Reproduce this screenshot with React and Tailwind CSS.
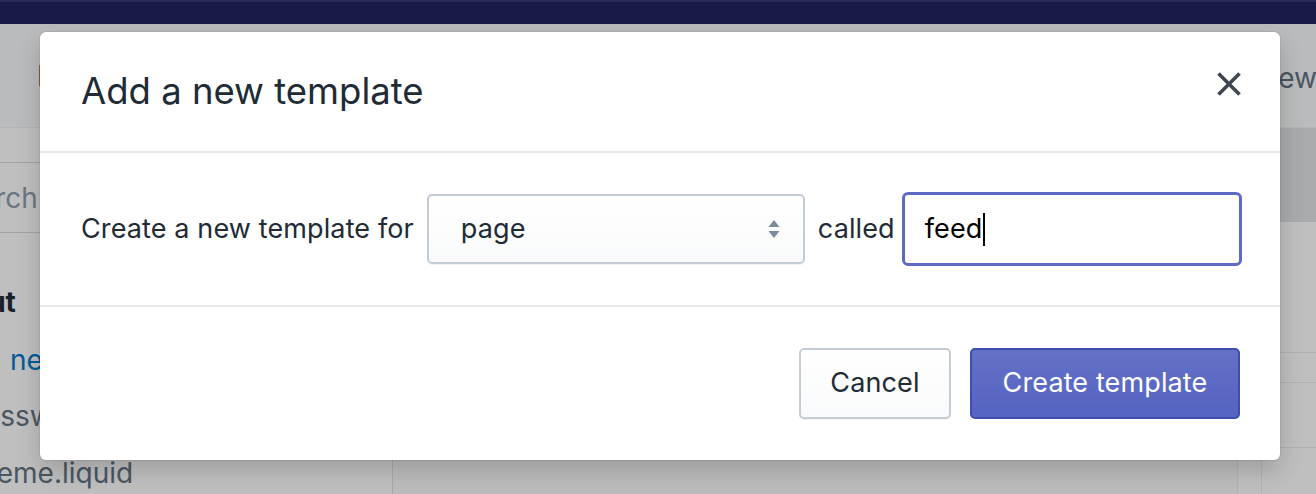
export default function App() {
  return (
    <div
      className="relative w-[1316px] h-[494px] overflow-hidden bg-white"
      style={{ fontFamily: 'Inter, "Noto Sans", sans-serif' }}
    >
      <Page />
      <div className="absolute inset-0 bg-[rgba(0,0,0,0.25)]" />
      <TemplateModal />
    </div>
  )
}

function Page() {
  return (
    <div className="flex flex-col h-full">
      <div className="h-[24px] shrink-0 bg-[#1f2463] border-t-2 border-[#363a75]" />
      <div className="h-[104px] shrink-0 flex items-center bg-[#f9fafb] border-b border-[#eef0f2] whitespace-nowrap">
        <span className="ml-[37px] text-[28px] text-[#212b36]">Edit code</span>
        <span className="ml-auto mr-[-1px] text-[28px] text-[#637381] translate-y-[2px]">Preview</span>
      </div>
      <div className="flex flex-1 min-h-0">
        <aside className="w-[393px] shrink-0 bg-white border-r border-[#dfe3e8] overflow-hidden pt-[34px] whitespace-nowrap">
          <div className="ml-[-55px] h-[71px] flex items-center border-y border-[#d6dae0]">
            <span className="text-[28px] text-[#919eab]">Search files...</span>
          </div>
          <div className="ml-[-77px] mt-[49px] text-[28px] font-bold text-[#212b36] leading-[40px]">Layout</div>
          <div className="ml-[-87px] mt-[18px] text-[28px] text-[#007ace] leading-[40px] [word-spacing:6px]">Add a new layout</div>
          <div className="ml-[-33px] mt-[16px] text-[28px] text-[#637381] leading-[40px]">password.liquid</div>
          <div className="ml-[-29px] mt-[17px] text-[28px] text-[#637381] leading-[40px]">theme.liquid</div>
        </aside>
        <main className="flex-1 flex flex-col">
          <div className="h-[94px] shrink-0 bg-[#e0e3e7]" />
          <div className="flex-1 flex">
            <div className="flex-1 bg-[#fbfbfb]" />
            <div className="w-[25px] border-x border-[#eceef0] bg-white" />
            <div className="w-[54px] bg-white flex flex-col">
              <div className="h-[131px] border-b border-[#eceef0]" />
              <div className="h-[30px] border-b border-[#eceef0]" />
              <div className="h-[65px] border-b border-[#eceef0]" />
            </div>
          </div>
        </main>
      </div>
    </div>
  )
}

function TemplateModal() {
  return (
    <div className="absolute left-[40px] top-[32px] w-[1240px] h-[428px] bg-white rounded-[6px] shadow-[0_0_0_1px_rgba(0,0,0,0.05),0_10px_24px_rgba(0,0,0,0.18)] flex flex-col">
      <div className="h-[121px] shrink-0 flex items-center justify-between pl-[41px] pr-[38px] border-b-2 border-[#e6e8ea]">
        <h2 className="text-[36.5px] text-[#212b36] leading-none whitespace-nowrap">Add a new template</h2>
        <button className="self-start mt-[39px] w-[26px] h-[26px] flex items-center justify-center text-[#3d4651]">
          <svg width="26" height="26" viewBox="0 0 26 26" fill="none" stroke="currentColor" strokeWidth="3.6">
            <path d="M2.5 2.5 L23.5 23.5 M23.5 2.5 L2.5 23.5" />
          </svg>
        </button>
      </div>
      <div className="h-[154px] shrink-0 flex items-center pl-[41px] pr-[39px] border-b-2 border-[#e6e8ea] text-[27px] tracking-[0.12px] text-[#212b36] whitespace-nowrap">
        <span className="shrink-0">Create a new template for</span>
        <div className="shrink-0 ml-[13px] w-[378px] h-[70px] rounded-[5px] border-2 border-[#c4cdd5] bg-gradient-to-b from-white to-[#f9fafb] shadow-[0_1px_0_rgba(22,29,37,0.05)] flex items-center pl-[32px] pr-[23px]">
          <span className="flex-1">page</span>
          <svg width="12" height="20" viewBox="0 0 12 20" fill="#798c9c">
            <path d="M6 1 L11.5 8 H0.5 Z" />
            <path d="M6 19 L11.5 12 H0.5 Z" />
          </svg>
        </div>
        <span className="shrink-0 ml-[13px]">called</span>
        <div className="shrink-0 ml-[7px] w-[340px] h-[74px] rounded-[6px] border-[3px] border-[#5c6ac4] flex items-center pl-[20px] text-black">
          <span>feed</span>
          <span className="ml-[1px] w-[2px] h-[33px] bg-black" />
        </div>
      </div>
      <div className="flex-1 flex items-center justify-end gap-[19px] pr-[40px]">
        <button className="w-[152px] h-[71px] rounded-[5px] border-2 border-[#c4cdd5] bg-gradient-to-b from-white to-[#f9fafb] shadow-[0_1px_0_rgba(22,29,37,0.05)] text-[27px] tracking-[0.12px] text-[#212b36]">
          Cancel
        </button>
        <button className="w-[270px] h-[71px] rounded-[5px] border-2 border-[#3f4eae] bg-gradient-to-b from-[#6371c7] to-[#5563c1] text-[27px] tracking-[0.12px] text-white">
          Create template
        </button>
      </div>
    </div>
  )
}
